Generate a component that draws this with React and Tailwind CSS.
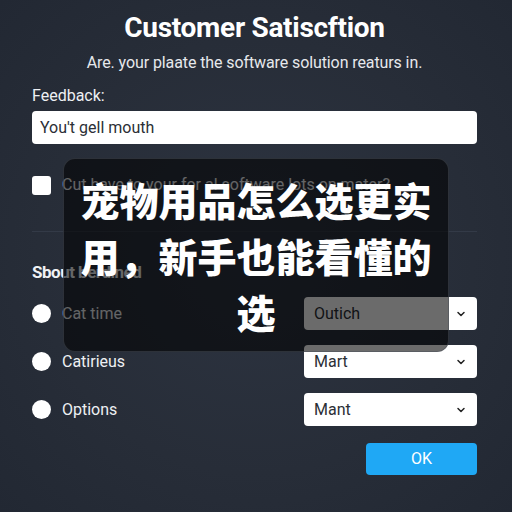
import React from "react";

const Chevron = () => (
  <svg width="12" height="12" viewBox="0 0 24 24" fill="none" stroke="currentColor" strokeWidth="3" strokeLinecap="round" strokeLinejoin="round">
    <path d="M6 9l6 6 6-6" />
  </svg>
);

const Select = ({ value }) => (
  <div className="w-[173px] h-[33px] bg-white rounded-[4px] flex items-center justify-between pl-[10px] pr-[10px] text-[16px] text-[#2b2f36]">
    <span>{value}</span>
    <span className="text-[#222]"><Chevron /></span>
  </div>
);

const RadioRow = ({ label, value }) => (
  <div className="flex items-center justify-between h-[33px]">
    <div className="flex items-center gap-[11px]">
      <div className="w-[19px] h-[19px] rounded-full bg-white" />
      <span className="text-[16px] text-[#eef0f3]">{label}</span>
    </div>
    <Select value={value} />
  </div>
);

export default function App() {
  return (
    <div
      className="relative w-[512px] h-[512px] overflow-hidden bg-[#282e3a]"
      style={{ fontFamily: "Roboto, 'Liberation Sans', sans-serif" }}
    >
      <div className="absolute inset-0 bg-[radial-gradient(ellipse_at_center,_#2d3441_0%,_#272d38_60%,_#222833_100%)]" />

      <div className="relative flex flex-col pl-[32px] pr-[35px] pt-[11px]">
        <h1 className="text-center text-[28px] leading-[34px] font-bold text-white tracking-[-0.3px]">
          Customer Satiscftion
        </h1>
        <p className="text-center text-[16px] leading-[20px] mt-[8px] text-[#e6e8ec] tracking-[-0.1px]">
          Are. your plaate the software solution reaturs in.
        </p>
        <label className="text-[16px] leading-[20px] mt-[13px] text-[#eef0f3]">Feedback:</label>
        <div className="mt-[5px] h-[33px] bg-white rounded-[4px] flex items-center px-[8px] text-[16px] text-[#2b2f36]">
          You't gell mouth
        </div>

        <div className="mt-[29px] flex items-center gap-[11px]">
          <div className="w-[19px] h-[19px] rounded-[3px] bg-white" />
          <span className="text-[16px] text-[#eef0f3]">Cut have to your for al software lots on mater?</span>
        </div>

        <div className="mt-[34px] h-px bg-[#333a47]" />

        <h2 className="mt-[30px] text-[17px] leading-[20px] font-bold text-[#f0f2f5] tracking-[-0.5px]">
          Sbout berdined
        </h2>

        <div className="mt-[15px] flex flex-col gap-[15px]">
          <RadioRow label="Cat time" value="Outich" />
          <RadioRow label="Catirieus" value="Mart" />
          <RadioRow label="Options" value="Mant" />
        </div>

        <div className="mt-[17px] flex justify-end">
          <button className="w-[111px] h-[32px] rounded-[4px] bg-[#1fa8f5] text-white text-[16px]">
            OK
          </button>
        </div>
      </div>

      <div className="absolute left-[63px] top-[158px] w-[386px] h-[194px] rounded-[12px] bg-black/[0.58] border border-[#4a505a]/50 flex items-center justify-center">
        <p
          className="text-center text-white font-black text-[39px] leading-[56px] px-[8px]"
          style={{ fontFamily: "'Noto Sans CJK SC', sans-serif" }}
        >
          宠物用品怎么选更实用，新手也能看懂的选
        </p>
      </div>
    </div>
  );
}
